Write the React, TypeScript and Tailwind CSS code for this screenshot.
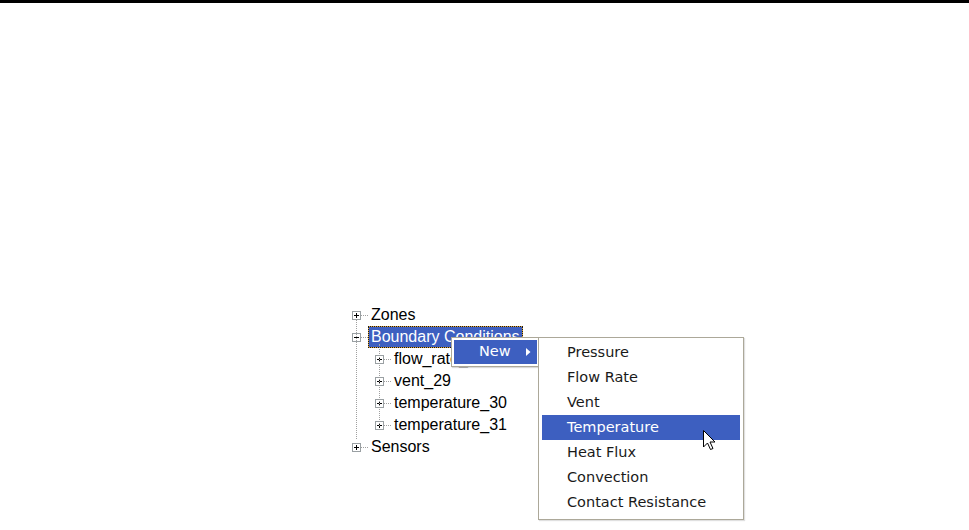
import React from "react";

const Expander = ({ open }: { open?: boolean }) => (
  <svg width="9" height="9" viewBox="0 0 9 9" className="shrink-0 block">
    <rect x="0.5" y="0.5" width="8" height="8" fill="#fff" stroke="#9aa0a3" />
    <line x1="2" y1="4.5" x2="7" y2="4.5" stroke="#000" />
    {!open && <line x1="4.5" y1="2" x2="4.5" y2="7" stroke="#000" />}
  </svg>
);

const Row = ({
  level,
  label,
  open,
  selected,
}: {
  level: number;
  label: string;
  open?: boolean;
  selected?: boolean;
}) => (
  <div className={`flex items-center h-[22px] ${level === 1 ? "pl-[23px]" : ""}`}>
    <Expander open={open} />
    <div className="w-[7px] border-t border-dotted border-[#a0a0a0] shrink-0" />
    {selected ? (
      <span className="bg-[#e2a53a] leading-none">
        <span className="block bg-[#3d5fc0] bg-clip-padding border border-dotted border-[#1a1a1a] text-white px-[2px] leading-[20px]">
          {label}
        </span>
      </span>
    ) : (
      <span className="px-[3px] text-black leading-[20px] whitespace-nowrap">{label}</span>
    )}
  </div>
);

const items = [
  "Pressure",
  "Flow Rate",
  "Vent",
  "Temperature",
  "Heat Flux",
  "Convection",
  "Contact Resistance",
];

export default function App() {
  return (
    <div className="w-[969px] h-[530px] bg-white relative overflow-hidden">
      <div className="h-[3px] bg-black" />

      <div
        className="relative mt-[301px] ml-[352px] text-[16px]"
        style={{ fontFamily: '"Liberation Sans", Arial, sans-serif' }}
      >
        {/* tree lines */}
        <div className="absolute left-[4px] top-[15px] h-[120px] border-l border-dotted border-[#a0a0a0]" />
        <div className="absolute left-[27px] top-[40px] h-[82px] border-l border-dotted border-[#a0a0a0]" />

        <Row level={0} label="Zones" />
        <Row level={0} label="Boundary Conditions" open selected />
        <Row level={1} label="flow_rate_28" />
        <Row level={1} label="vent_29" />
        <Row level={1} label="temperature_30" />
        <Row level={1} label="temperature_31" />
        <Row level={0} label="Sensors" />
      </div>

      {/* New context menu */}
      <div
        className="absolute left-[451px] top-[337px] w-[89px] border border-[#aca899] bg-white p-[2px] shadow-[1px_1px_1px_rgba(0,0,0,0.15)]"
        style={{ fontFamily: '"DejaVu Sans", Verdana, sans-serif' }}
      >
        <div className="h-[24px] bg-[#3d5fc0] text-white text-[14.5px] flex items-center pl-[25px] pr-[6px] justify-between">
          <span>New</span>
          <svg width="5" height="8" viewBox="0 0 5 8">
            <path d="M0 0 L4.5 4 L0 8 Z" fill="#fff" />
          </svg>
        </div>
      </div>

      {/* Submenu */}
      <div
        className="absolute left-[538px] top-[337px] w-[206px] border border-[#aca899] bg-white px-[3px] pt-[2px] pb-[4px] shadow-[1px_1px_1px_rgba(0,0,0,0.12)]"
        style={{ fontFamily: '"DejaVu Sans", Verdana, sans-serif' }}
      >
        {items.map((it) => (
          <div
            key={it}
            className={`h-[25px] flex items-center pl-[25px] text-[14.5px] ${
              it === "Temperature" ? "bg-[#3d5fc0] text-white" : "text-[#1a1a1a]"
            }`}
          >
            {it}
          </div>
        ))}
      </div>

      {/* cursor */}
      <svg
        className="absolute left-[703px] top-[430px]"
        width="13"
        height="21"
        viewBox="0 0 13 21"
      >
        <path
          d="M0.5 0.5 L0.5 17 L4.5 13 L7.5 19.5 L10 18.5 L7 12 L12 12 Z"
          fill="#fff"
          stroke="#000"
          strokeWidth="1"
          strokeLinejoin="miter"
        />
      </svg>
    </div>
  );
}
